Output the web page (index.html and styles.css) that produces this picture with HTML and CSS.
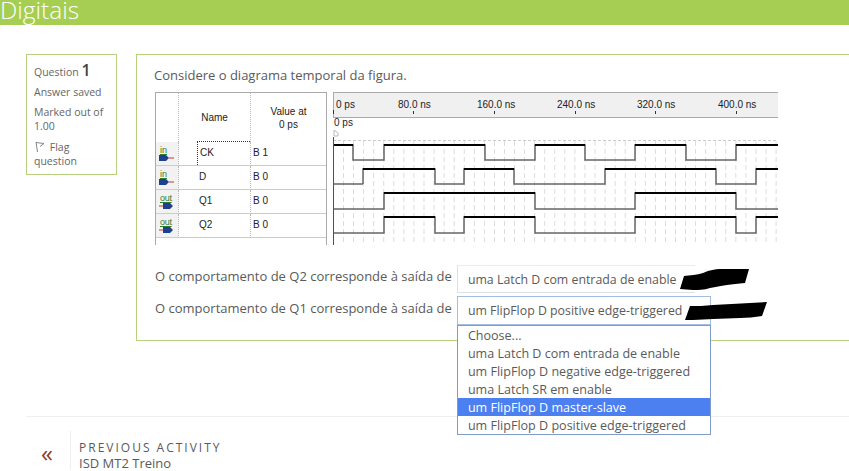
FILE: index.html
```html
<!DOCTYPE html>
<html lang="pt">
<head>
  <meta charset="UTF-8">
  <title>Digitais</title>
  <link rel="stylesheet" href="styles.css">
</head>
<body>

<header class="topbar"><h1>Digitais</h1></header>

<div class="content">
  <aside class="info">
    <div class="info-line">Question <b>1</b></div>
    <div class="info-line">Answer saved</div>
    <div class="info-line">Marked out of 1.00</div>
    <div class="info-line flag-line">
      <svg class="flag" width="11" height="12" viewBox="0 0 11 12"><path d="M2 1l1.5 10M2 1.5l8 1-4 3" fill="none" stroke="#888" stroke-width="1"/></svg>
      Flag question
    </div>
  </aside>

  <main class="question">
    <p class="prompt">Considere o diagrama temporal da figura.</p>

    <div class="diagram">
      <div class="signals">
        <div class="cell icon-cell"></div>
        <div class="cell head">Name</div>
        <div class="cell head">Value at<br>0 ps</div>

        <div class="cell icon-cell"><span class="pin-in">in</span><svg width="16" height="8" viewBox="0 0 16 8"><path d="M0 1h7l3 3-3 3H0z" fill="#1f3f8f"/><path d="M10 4h5" stroke="#c0392b"/></svg></div>
        <div class="cell name focused">CK</div>
        <div class="cell">B 1</div>

        <div class="cell icon-cell"><span class="pin-in">in</span><svg width="16" height="8" viewBox="0 0 16 8"><path d="M0 1h7l3 3-3 3H0z" fill="#1f3f8f"/><path d="M10 4h5" stroke="#c0392b"/></svg></div>
        <div class="cell name">D</div>
        <div class="cell">B 0</div>

        <div class="cell icon-cell"><span class="pin-out">out</span><svg width="16" height="8" viewBox="0 0 16 8"><path d="M4 1h7l3 3-3 3H4z" fill="#1f3f8f"/><path d="M0 4h4" stroke="#c0392b"/></svg></div>
        <div class="cell name">Q1</div>
        <div class="cell">B 0</div>

        <div class="cell icon-cell"><span class="pin-out">out</span><svg width="16" height="8" viewBox="0 0 16 8"><path d="M4 1h7l3 3-3 3H4z" fill="#1f3f8f"/><path d="M0 4h4" stroke="#c0392b"/></svg></div>
        <div class="cell name">Q2</div>
        <div class="cell">B 0</div>
      </div>

      <svg class="waves" width="445" height="153" viewBox="333 92 445 153">
        <defs>
          <pattern id="grid" x="333" y="141" width="10.06" height="8" patternUnits="userSpaceOnUse">
            <path d="M0 0v5" stroke="#bbb" stroke-width="1"/>
          </pattern>
        </defs>
        <rect class="ruler" x="333" y="92" width="445" height="25"/>
        <path d="M333 92.5h445M333 117.5h445M333.5 92v25" stroke="#aaa" fill="none"/>
        <path d="M333 140.5h445" stroke="#ccc" stroke-dasharray="3 2"/>
        <rect x="333" y="141" width="445" height="104" fill="url(#grid)"/>

        <text x="336" y="108">0 ps</text>
        <text x="398" y="108">80.0 ns</text>
        <text x="477" y="108">160.0 ns</text>
        <text x="557" y="108">240.0 ns</text>
        <text x="637" y="108">320.0 ns</text>
        <text x="718" y="108">400.0 ns</text>
        <path d="M333.5 110v4M413.5 111v3M494.5 111v3M575.5 111v3M655.5 111v3M736.5 111v3" stroke="#333"/>
        <text x="334" y="126">0 ps</text>
        <path d="M334 130v6h4v-3z" fill="none" stroke="#bbb"/>

        <!-- traces: grey base, black on the high parts -->
        <g class="trace">
          <path d="M334 145H353V160H384V145H485V160H535V145H585V160H635V145H686V160H736V145H778"/>
          <path d="M363 184V169H435V184H464V169H514V184H605V169H716V184H756V169H778M334 184H363"/>
          <path d="M334 209H384V193H535V209H635V193H736V209H778"/>
          <path d="M334 233H384V217H435V233H464V217H535V233H635V217H736V233H756V217H778"/>
        </g>
        <g class="high">
          <path d="M334 145H353M384 145H485M535 145H585M635 145H686M736 145H778"/>
          <path d="M363 169H435M464 169H514M605 169H716M756 169H778"/>
          <path d="M384 193H535M635 193H736"/>
          <path d="M384 217H435M464 217H535M635 217H736M756 217H778"/>
        </g>
        <path d="M333 137v108" stroke="#4a3fc0" stroke-width="2"/>
      </svg>
    </div>

    <div class="answer">
      <span>O comportamento de Q2 corresponde à saída de</span>
      <div class="select plain">uma Latch D com entrada de enable
        <svg class="scribble s1" width="70" height="22" viewBox="0 0 70 22"><path d="M0 20L4 7C10 6 17 6 23 4C30 1 35 0 40 0H69L65 14C58 15 52 15 47 16C40 17 36 18 30 19C24 21 18 21 13 21z" fill="#000"/></svg>
      </div>
    </div>
    <div class="answer">
      <span>O comportamento de Q1 corresponde à saída de</span>
      <div class="select open">um FlipFlop D positive edge-triggered
        <svg class="scribble s2" width="82" height="19" viewBox="0 0 82 19"><path d="M0 18L5 4C12 4 20 4 28 3L82 0L77 14C70 15 62 16 55 16L28 17L8 18z" fill="#000"/></svg>
        <ul class="dropdown">
          <li>Choose...</li>
          <li>uma Latch D com entrada de enable</li>
          <li>um FlipFlop D negative edge-triggered</li>
          <li>uma Latch SR em enable</li>
          <li class="selected">um FlipFlop D master-slave</li>
          <li>um FlipFlop D positive edge-triggered</li>
        </ul>
      </div>
    </div>
  </main>
</div>

<footer class="nav">
  <div class="arrow">&laquo;</div>
  <div class="nav-text">
    <div class="nav-label">PREVIOUS ACTIVITY</div>
    <div class="nav-name">ISD MT2 Treino</div>
  </div>
</footer>

</body>
</html>
```

FILE: styles.css
```css
html, body {
  height: 471px;
  overflow: hidden;
}

body {
  margin: 0;
  font-family: "Open Sans", sans-serif;
  color: #5a5a5a;
  background: #fff;
}

.topbar {
  height: 25px;
  background: #a6ce52;
}

.topbar h1 {
  margin: 0;
  font-size: 24.5px;
  line-height: 19px;
  font-weight: 300;
  color: #fff;
}

.content {
  display: flex;
  align-items: flex-start;
  gap: 19px;
  padding: 29px 0 0 26px;
  height: 391px;
  box-sizing: border-box;
}

.info {
  width: 91px;
  height: 121px;
  padding: 8px 7px 0;
  border: 1px solid #b7d27f;
  box-sizing: border-box;
  font-size: 10.5px;
  line-height: 14px;
  color: #666;
}

.info-line {
  margin-bottom: 6px;
}

.flag-line {
  margin-top: 7px;
}

.info-line b {
  font-size: 16px;
  font-weight: 600;
  color: #444;
}

.flag {
  vertical-align: -2px;
  margin-right: 2px;
}

.question {
  flex: 1;
  height: 287px;
  margin-right: -10px;
  padding: 11px 0 0 17px;
  border: 1px solid #b7d27f;
  box-sizing: border-box;
}

.prompt {
  margin: 0 0 8px;
  font-size: 13px;
  line-height: 18px;
}

.diagram {
  display: flex;
  gap: 6px;
  margin-left: 1px;
  height: 153px;
  margin-bottom: 20px;
}

.signals {
  display: grid;
  grid-template-columns: 23px 72px 75px;
  grid-template-rows: 49px repeat(4, 24px) 8px;
  width: 172px;
  height: 153px;
  box-sizing: border-box;
  border: 1px solid #aaa;
  border-bottom: 0;
  font-family: "Liberation Sans", Arial, sans-serif;
  font-size: 10px;
  color: #222;
}

.cell {
  display: flex;
  align-items: center;
  padding: 0 0 2px 2px;
  box-sizing: border-box;
  border-right: 1px dotted #bbb;
  border-bottom: 1px solid #ccc;
}

.cell:nth-child(3n) {
  border-right: 0;
}

.cell.head {
  justify-content: center;
  text-align: center;
  padding: 0;
  line-height: 13px;
  border-bottom: 0;
}

.cell.name {
  padding-left: 20px;
}

.cell.focused {
  position: relative;
  padding-left: 21px;
}

.cell.focused::before {
  content: "";
  position: absolute;
  left: 18px;
  top: -1px;
  right: 0;
  bottom: 0;
  border-top: 1px dotted #333;
  border-left: 1px dotted #333;
}

.icon-cell {
  flex-direction: column;
  align-items: flex-start;
  justify-content: center;
  padding: 0 0 0 3px;
  background: #f2f2f2;
}

.signals .cell:first-child {
  background: none;
  border-bottom: 0;
}

.pin-in, .pin-out {
  font-size: 9px;
  line-height: 8px;
  text-decoration: underline;
  margin-left: 1px;
}

.pin-in { color: #2e7d32; }
.pin-out { color: #2e7d32; letter-spacing: -0.3px; }

.waves {
  display: block;
}

.waves text {
  font-family: "Liberation Sans", Arial, sans-serif;
  font-size: 10px;
  fill: #222;
}

.ruler {
  fill: #f0f0f0;
}

.trace path {
  fill: none;
  stroke: #666;
  stroke-width: 1.5;
}

.high path {
  fill: none;
  stroke: #000;
  stroke-width: 2;
}

.answer {
  display: flex;
  align-items: center;
  gap: 5px;
  margin-left: 1px;
  font-size: 13px;
  margin-bottom: 3px;
}

.answer > span {
  padding-bottom: 6px;
}

.select {
  position: relative;
  width: 254px;
  height: 28px;
  padding-left: 10px;
  box-sizing: border-box;
  font-size: 12.35px;
  line-height: 27px;
  white-space: nowrap;
}

.select.plain {
  border-left: 1px solid #e0e0e0;
  border-top: 1px solid #ececec;
  border-bottom: 1px solid #e0e0e0;
  width: 238px;
}

.select.open {
  height: 29px;
  border: 1px solid #a3bde3;
}

.scribble {
  position: absolute;
}

.s1 { left: 222px; top: 3px; }
.s2 { left: 227px; top: 5px; }

.dropdown {
  position: absolute;
  left: -1px;
  top: 28px;
  width: 254px;
  margin: 0;
  padding: 0;
  list-style: none;
  background: #fff;
  border: 1px solid #7f9ccb;
  box-sizing: border-box;
  font-size: 12.55px;
  line-height: 20px;
}

.dropdown li {
  height: 18px;
  padding-left: 10px;
}

.dropdown .selected {
  background: #4c80f0;
  color: #fff;
}

.nav {
  display: flex;
  height: 54px;
  box-sizing: border-box;
  margin: 0 0 0 26px;
  padding-top: 14px;
  border-top: 1px solid #eee;
}

.arrow {
  width: 45px;
  box-sizing: border-box;
  padding: 10px 0 0 15px;
  border-right: 1px solid #eee;
  font-size: 24px;
  line-height: 24px;
  color: #8a3b2c;
}

.nav-text {
  padding: 9px 0 0 8px;
}

.nav-label {
  font-size: 12px;
  line-height: 16px;
  letter-spacing: 2px;
}

.nav-name {
  font-size: 13px;
  line-height: 15px;
}
```
